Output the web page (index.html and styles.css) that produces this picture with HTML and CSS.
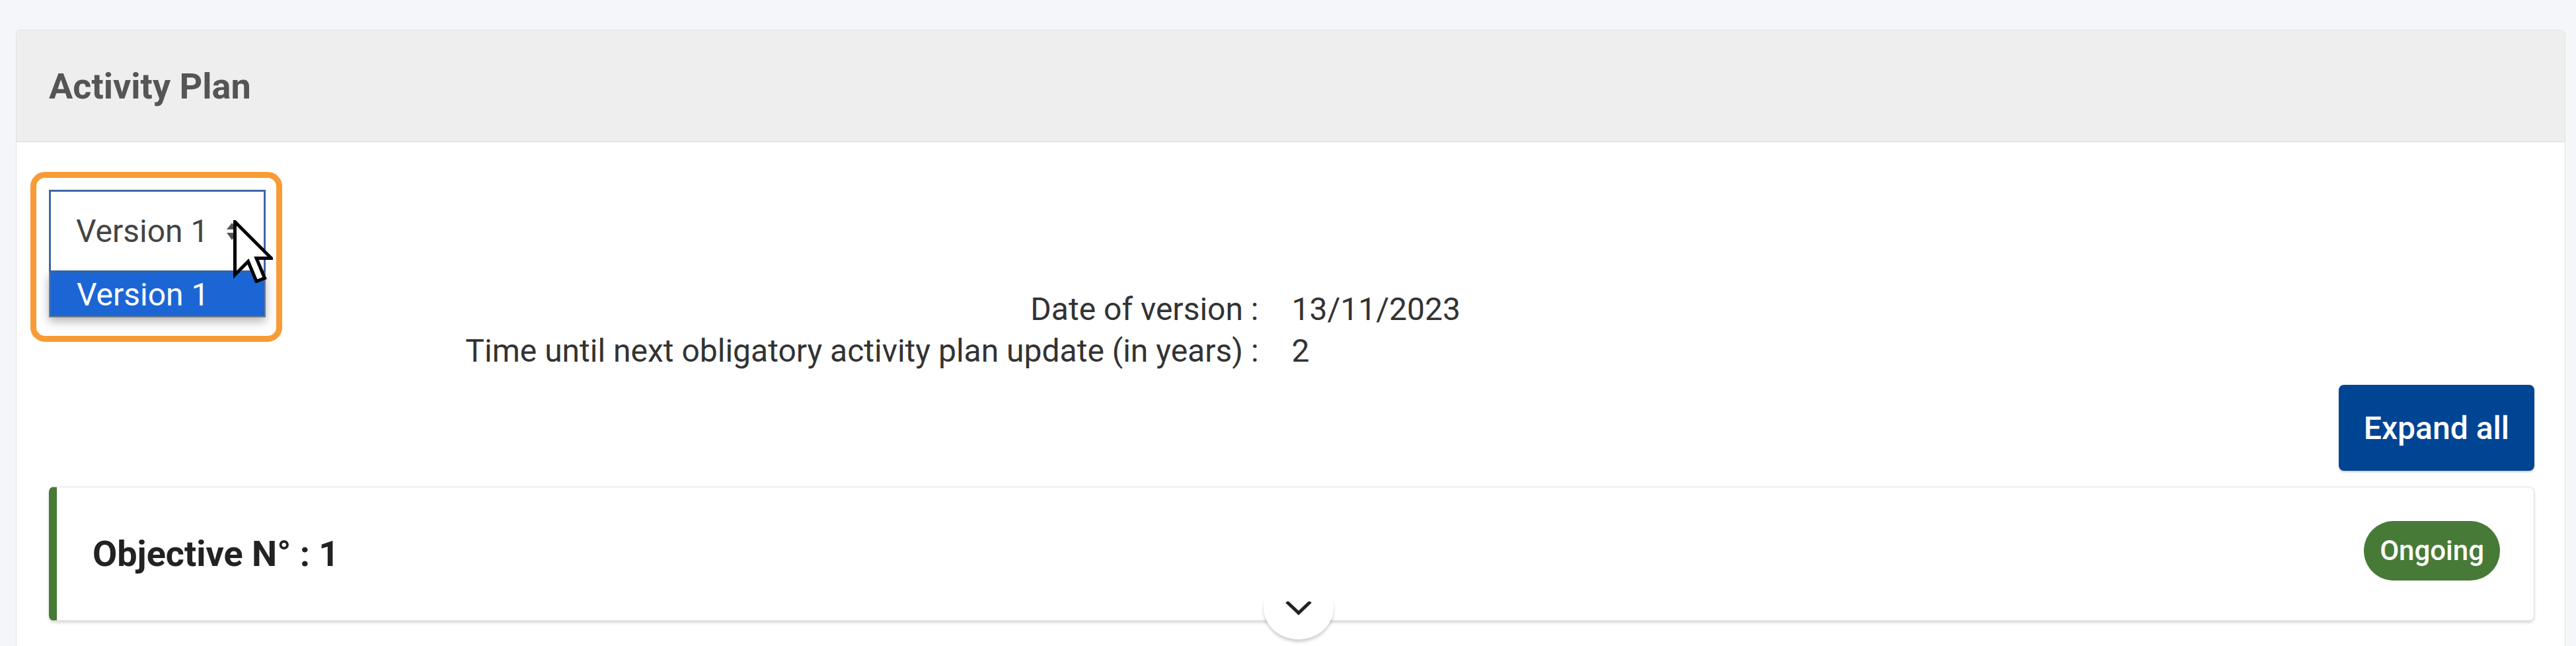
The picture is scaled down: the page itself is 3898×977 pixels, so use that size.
FILE: index.html
```html
<!DOCTYPE html>
<html lang="en">
<head>
<meta charset="utf-8">
<title>Activity Plan</title>
<link rel="stylesheet" href="styles.css">
</head>
<body>
<div class="card">
  <div class="card-header">
    <h2 class="card-title">Activity Plan</h2>
  </div>
  <div class="card-body">
    <div class="version-select">
      <div class="highlight"></div>
      <div class="select-box">
        <span class="select-value">Version 1</span>
        <svg class="select-arrows" viewBox="0 0 16 26" width="16" height="26" aria-hidden="true">
          <polygon points="8,0 16,10 0,10" fill="#555"/>
          <polygon points="0,15 16,15 8,26" fill="#555"/>
        </svg>
      </div>
      <div class="select-options">
        <div class="select-option">Version 1</div>
      </div>
      <svg class="cursor" viewBox="0 0 12 19" width="60" height="95" aria-hidden="true">
        <path d="M0.5,0.5 L0.5,16.5 L4.5,12.5 L7,18.5 L9.5,17.5 L7,11.5 L11.5,11.5 Z" fill="#fff" stroke="#000" stroke-width="1" stroke-linejoin="miter"/>
      </svg>
    </div>

    <div class="info">
      <div class="info-label">Date of version :</div>
      <div class="info-value">13/11/2023</div>
      <div class="info-label">Time until next obligatory activity plan update (in years) :</div>
      <div class="info-value">2</div>
    </div>

    <div class="actions">
      <button class="btn-primary" type="button">Expand all</button>
    </div>

    <div class="objective">
      <div class="objective-title">Objective N° : 1</div>
      <span class="badge">Ongoing</span>
      <button class="toggle" type="button" aria-label="Expand">
        <svg viewBox="0 0 42 24" width="42" height="24" aria-hidden="true">
          <polyline points="3,3 21,20 39,3" fill="none" stroke="#222" stroke-width="5"/>
        </svg>
      </button>
    </div>
  </div>
</div>
</body>
</html>
```

FILE: styles.css
```css
html, body {
  margin: 0;
  overflow: hidden;
}

body {
  background: #f5f6fa;
  padding: 45px 16px 0 24px;
  font-family: Roboto, "Liberation Sans", Arial, sans-serif;
  color: #333;
}

.card {
  background: #fff;
  border: 1px solid #e1e1e1;
  border-radius: 6px;
  min-height: 1100px;
}

.card-header {
  background: #eeeeee;
  height: 168px;
  border-bottom: 1px solid #d9d9d9;
  border-radius: 6px 6px 0 0;
  display: flex;
  align-items: center;
  padding-left: 49px;
}

.card-title {
  margin: 0;
  font-size: 54px;
  font-weight: 700;
  color: #555;
}

.card-body {
  padding: 72px 46px 60px 49px;
}

.version-select {
  position: relative;
  width: 328px;
}

.select-box {
  box-sizing: border-box;
  height: 125px;
  border: 3px solid #3d67a8;
  background: #fff;
  display: flex;
  align-items: center;
  padding-left: 38px;
  gap: 28px;
  font-size: 48px;
  color: #444;
}

.select-arrows {
  flex: none;
}

.select-options {
  position: absolute;
  left: 0;
  right: 0;
  top: 125px;
  background: #1b66d4;
  border: 2px solid #6c7a89;
  border-top: none;
  box-shadow: 0 6px 14px rgba(0, 0, 0, 0.3);
  z-index: 2;
}

.select-option {
  height: 66px;
  display: flex;
  align-items: center;
  padding-left: 40px;
  font-size: 48px;
  color: #fff;
}

.highlight {
  position: absolute;
  left: -28px;
  top: -27px;
  width: 381px;
  height: 257px;
  box-sizing: border-box;
  border: 9px solid #f89b35;
  border-radius: 22px;
  z-index: 3;
  pointer-events: none;
}

.cursor {
  position: absolute;
  left: 279px;
  top: 46px;
  z-index: 4;
}

.info {
  display: grid;
  grid-template-columns: 1fr 1fr;
  margin-top: 24px;
  font-size: 48px;
  line-height: 62px;
  color: #333;
}

.info-label {
  text-align: right;
  padding-right: 50px;
  padding-top: 1px;
}

.info-value {
  padding-top: 1px;
}

.actions {
  display: flex;
  justify-content: flex-end;
  margin-top: 20px;
}

.btn-primary {
  height: 130px;
  padding: 0 38px;
  border: none;
  border-radius: 8px;
  background: #004494;
  color: #fff;
  font-family: Roboto, "Liberation Sans", Arial, sans-serif;
  font-size: 48px;
  font-weight: 500;
  box-shadow: 0 2px 3px rgba(0, 0, 0, 0.2);
}

.objective {
  position: relative;
  margin-top: 24px;
  height: 203px;
  box-sizing: border-box;
  border: 1px solid #e0e0e0;
  border-left: 12px solid #467a36;
  border-radius: 8px;
  box-shadow: 0 3px 4px rgba(0, 0, 0, 0.15);
  display: flex;
  align-items: center;
  justify-content: space-between;
  padding: 0 51px 0 54px;
}

.objective-title {
  font-size: 54px;
  font-weight: 700;
  color: #222;
}

.badge {
  height: 90px;
  padding: 0 24px;
  margin-bottom: 10px;
  border-radius: 45px;
  background: #477a37;
  color: #fff;
  font-size: 42px;
  font-weight: 500;
  display: flex;
  align-items: center;
}

.toggle {
  position: absolute;
  left: 50%;
  bottom: -29px;
  width: 106px;
  height: 96px;
  margin-left: -48px;
  padding: 0;
  border: none;
  border-radius: 50%;
  background: #fff;
  box-shadow: 0 4px 4px rgba(0, 0, 0, 0.18);
  display: flex;
  align-items: center;
  justify-content: center;
  clip-path: inset(40% -10px -20px -10px);
}
```
